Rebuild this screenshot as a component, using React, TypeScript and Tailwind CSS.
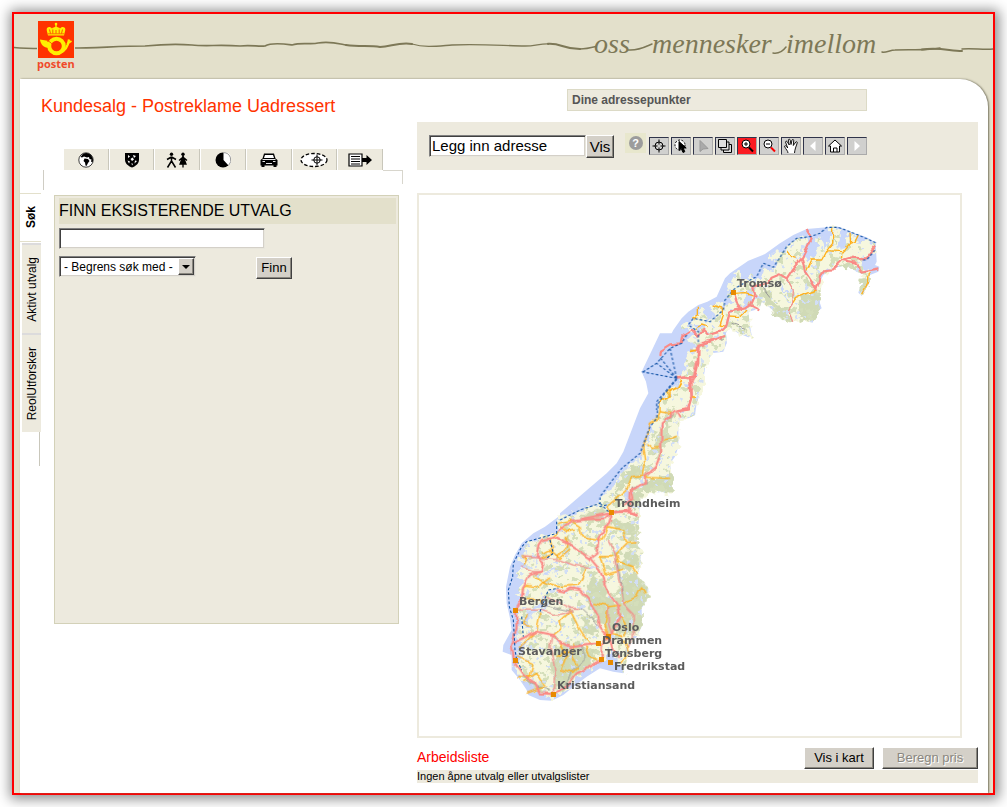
import type { ReactNode } from "react";

const raised =
  "border border-t-white border-l-white border-r-[#404040] border-b-[#404040] bg-[#d4d0c8] shadow-[inset_-1px_-1px_#8a877f]";
const sunken =
  "border border-t-[#808080] border-l-[#808080] border-r-[#e8e6dc] border-b-[#e8e6dc] bg-white shadow-[inset_1px_1px_#404040,inset_-1px_-1px_#d4d0c8]";

function Wave() {
  return (
    <svg
      viewBox="14 14 979 65"
      preserveAspectRatio="xMaxYMid slice"
      className="h-full w-full"
      role="img"
      aria-label="oss mennesker imellom"
    >
      <g fill="none" stroke="#7d7857" strokeLinecap="round">
        <path strokeWidth="1.5" d="M14 47.5C24 48.500 32 48.500 42 48.500" />
        <path strokeWidth="1.700" d="M72 48C95 48 120 46 145 46C160 44.500 180 44 192 45C205 46.500 220 44.500 240 46C252 44.500 258 47 265 46C272 42 285 44 292 45C302 42 312 45 318 43C330 41 338 43.500 346 45" />
        <path strokeWidth="2.100" d="M346 45C360 47 370 45 380 47C392 46 400 42 412 44" />
        <path strokeWidth="1.300" d="M412 44C425 48 438 46 452 45C480 44 500 45.500 525 46C535 46 540 43.500 548 43.800" />
        <path strokeWidth="2.200" d="M548 43.800C562 43 562 49 580 49" />
        <path strokeWidth="1.500" d="M580 49C585 49 590 48 596 46.500M628 50C638 51 645 47 652 44M773 53C779 54 783 51 786 47M882 52C886 53 890 50 895 50C912 49 925 51 940 48" />
        <path strokeWidth="2" d="M922 49.500C940 47 950 51 962 51" />
        <path strokeWidth="1.500" d="M962 49C972 48 984 50 993 49" />
      </g>
      <g className="fill-[#7d7857] font-['Liberation_Serif',serif] italic" fontSize="28">
        <text x="594" y="53">oss</text>
        <text x="652" y="53">mennesker</text>
        <text x="786" y="53">imellom</text>
      </g>
    </svg>
  );
}

function Horn() {
  return (
    <svg viewBox="0 0 36 37" className="h-[37px] w-9" aria-hidden="true">
      <rect width="36" height="37" fill="#ff3300" />
      <g fill="#ffef00">
        <circle cx="18" cy="3" r="1.300" />
        <path d="M17.300 3h1.400v5h-1.400zM9 7c2-1.800 4-.8 5 .5 1.500-2 6.500-2 8 0 1-1.300 3-2.300 5-.5 1 2-.5 4-1 7.500h-16c-.5-3.500-2-5.500-1-7.500z" />
      </g>
      <g stroke="#ff3300" fill="none">
        <path strokeWidth=".8" d="M11.500 8.500l1 4M14.800 8.500v4M18 9v3.500M21.200 8.500v4M24.500 8.500l-1 4" />
        <path strokeWidth=".7" d="M10 12.800h16" />
      </g>
      <path d="M11 20L2 18.500C2.500 23 5.500 27 11 27z" fill="#ffef00" />
      <circle cx="18.500" cy="25" r="7.300" fill="none" stroke="#ffef00" strokeWidth="4" />
      <path d="M9 20c4 .5 6 4 8 8.500 2 1 4-.5 5.500-3" fill="none" stroke="#ff3300" strokeWidth=".9" />
      <path d="M22.500 31.500C28 29.500 30 25 31 18.500" fill="none" stroke="#ffef00" strokeWidth="2.200" />
      <path d="M29 23l4.500-3" stroke="#ffef00" strokeWidth="1.800" />
    </svg>
  );
}

const tabIcons: { label: string; icon: ReactNode }[] = [
  {
    label: "Geografi",
    icon: (
      <svg viewBox="0 0 16 16" className="size-4">
        <circle cx="8" cy="8" r="7.200" fill="#fff" stroke="#111" strokeWidth=".8" />
        <path d="M5 1.800c3-1.300 6-.8 8 1.400 2 2 2.500 5 1.500 7.300L13 9.500l.5-2-2-.5-.5-2-2 .5L6 4.500l-2 1-1.500-.5z" />
        <path d="M6.500 6.500l3.500.5 1.500 2-1.500 2-1.500 3-1-.5-.5-3-1.500-1.500z" />
      </svg>
    ),
  },
  {
    label: "Kommune",
    icon: (
      <svg viewBox="0 0 16 16" className="size-4">
        <path d="M1 1h14v6.500c0 4-3 6.500-7 8-4-1.500-7-4-7-8z" />
        <path d="M4 3l2 1.500L4 6zM9 3l3 1-2 2zM6.500 7l2-1.500 1.500 2-2 1.500zM3.500 8.500l2.500 1-1 2zM11 8.500l2 .5-2.500 2.500zM7.500 11l1.500 1-1 1.500z" fill="#fff" />
      </svg>
    ),
  },
  {
    label: "Personer",
    icon: (
      <svg viewBox="0 0 24 16" className="h-4 w-6">
        <circle cx="6.500" cy="2.300" r="1.700" />
        <path d="M6.500 4.500v5M6.500 5L2 7.500M6.500 5L11 7.500M6.500 9L2.500 15.500M6.500 9L10.500 15.500" stroke="#000" strokeWidth="1.500" fill="none" />
        <circle cx="18" cy="2.300" r="1.700" />
        <path d="M18 4l3 8h-6zM18 5l-4 3.500M18 5l4 3.500M18 11.500v4" stroke="#000" strokeWidth="1.300" />
      </svg>
    ),
  },
  {
    label: "Segmenter",
    icon: (
      <svg viewBox="0 0 16 16" className="size-4">
        <circle cx="8" cy="8" r="7.500" />
        <path d="M8.500 0v8l5 5.500A7.500 7.500 0 0 0 8.500 0z" fill="#fff" />
        <path d="M8.500 .6a7.400 7.400 0 0 1 5 12.800" fill="none" stroke="#555" strokeWidth=".6" />
      </svg>
    ),
  },
  {
    label: "Bil",
    icon: (
      <svg viewBox="0 0 18 16" className="h-4 w-[18px]">
        <path d="M4 1.500h10l1.500 5L17.500 8v5.500h-1V15h-3v-1.500h-9V15h-3v-1.500h-1V8l2-1.500z" />
        <path d="M5 3h8l1 3H4z" fill="#fff" />
        <path d="M2.500 9.500h2.500M13 9.500h2.500M6 11.500h6M2.500 7.500h13" stroke="#fff" strokeWidth=".9" />
      </svg>
    ),
  },
  {
    label: "Område",
    icon: (
      <svg viewBox="0 0 28 16" className="h-4 w-7" fill="none" stroke="#000">
        <ellipse cx="14" cy="8" rx="13" ry="6.500" fill="#fff" strokeWidth="1.300" strokeDasharray="3.500 2" />
        <circle cx="17" cy="8" r="3.200" strokeWidth="1" />
        <path d="M17 2.500v11M11.500 8h11" strokeWidth="1" />
      </svg>
    ),
  },
  {
    label: "Liste",
    icon: (
      <svg viewBox="0 0 24 16" className="h-4 w-6">
        <path d="M1 2h13v12H1z" fill="#fff" stroke="#000" strokeWidth="1.200" />
        <path d="M3 4.500h9M3 7h9M3 9.500h9M3 12h9" stroke="#000" />
        <path d="M14 6h4.500V3L24 8l-5.500 5v-3H14z" />
      </svg>
    ),
  },
];

const tools: { label: string; active?: boolean; icon: ReactNode }[] = [
  {
    label: "Sentrer",
    icon: (
      <>
        <circle cx="8" cy="8" r="4" />
        <path d="M8 1.500v5M8 9.500v5M1.500 8h5M9.500 8h5" />
      </>
    ),
  },
  {
    label: "Velg i område",
    icon: (
      <>
        <circle cx="7" cy="7" r="5" fill="#fff" strokeDasharray="2 1.500" />
        <path d="M6 3.500v9l2.200-2 1.800 4 1.800-.8L10.200 10h3z" fill="#000" />
      </>
    ),
  },
  { label: "Pek", icon: <path d="M5 2.500v11L8 11l5-.5z" fill="#aaa" stroke="#999" /> },
  {
    label: "Lag",
    icon: (
      <>
        <path d="M6.500 6.500h8v8h-8z" fill="#ddd" />
        <path d="M4 4h8v8H4z" fill="#ddd" />
        <path d="M1.500 1.500h8v8h-8z" fill="#ddd" />
      </>
    ),
  },
  {
    label: "Zoom inn",
    active: true,
    icon: (
      <>
        <circle cx="7" cy="6" r="4" fill="#fff" />
        <path d="M5 6h4M7 4v4" />
        <path d="M10 9.500l4 4" strokeWidth="2" />
      </>
    ),
  },
  {
    label: "Zoom ut",
    icon: (
      <>
        <circle cx="7" cy="6" r="4" fill="#fff" />
        <path d="M5 6h4" />
        <path d="M10 9.500l4 4" stroke="#f00" strokeWidth="2" />
      </>
    ),
  },
  {
    label: "Panorer",
    icon: (
      <path
        d="M5 15c0-2-2-3.500-3.500-6.500.3-1.500 2-.8 3.200 1.500L2.500 4c.3-1.200 1.500-1 1.900 0L6.300 7 5.300 2c.4-1.200 1.700-1 1.900.2L8 6.500l1-4.500c.6-1 1.800-.6 1.700.5L10.300 7.500l2.500-3.500c.8-.7 1.800 0 1.400 1L12.500 10c-.4 2-1 3-1 5"
        fill="#fff"
        strokeWidth=".9"
      />
    ),
  },
  { label: "Forrige", icon: <path d="M10.500 3v10L5 8z" fill="#fff" stroke="none" /> },
  {
    label: "Hjem",
    icon: (
      <>
        <path d="M1.500 8L8 2l6.500 6h-2v6h-9V8z" fill="#fff" />
        <path d="M6.500 14v-4h3.500v4" />
      </>
    ),
  },
  { label: "Neste", icon: <path d="M5.500 3v10L11 8z" fill="#fff" stroke="none" /> },
];

/* Map geometry: three sheets (north, middle, south), each at three units per pixel. */
type Sheet = {
  origin: string;
  area: string;
  land: string;
  green: string;
  fjords: string;
  red: string;
  thin: string;
  orange: string;
  grey: string;
  ferry: string;
};

const sheets: Sheet[] = [
  {
    origin: "translate(620 210) scale(.33333)",
    area:
      "M767 98L740 82 700 68 655 50 620 52 560 57 520 75 480 100 435 132 385 152 330 190 315 205 290 260 262 275 235 285 205 305 185 325 160 360 145 390 118 415 110 445 65 485 78 510 88 545 75 580 58 605 60 615 205 615 215 600 225 570 245 530 255 470 275 430 310 425 320 400 318 370 325 350 355 370 385 382 395 375 390 350 385 305 405 300 420 290 425 275 440 285 470 310 490 330 515 335 535 325 560 332 578 338 585 310 605 295 600 280 600 215 610 195 640 175 680 165 710 185 735 195 735 215 720 230 715 248 725 258 735 240 750 215 750 195 775 185 778 170 765 165 770 155Z",
    land:
      "M765 100L745 92 715 92 705 78 692 70 685 95 668 112 655 118 660 80 655 55 635 55 630 75 628 100 610 122 607 75 595 80 590 110 575 150 558 150 550 130 560 100 565 85 555 75 530 85 510 105 490 125 450 130 450 150 475 160 450 185 430 175 425 195 405 215 395 185 385 215 360 205 355 185 340 200 325 240 322 265 345 275 310 290 290 275 270 290 290 320 265 330 245 300 220 320 215 345 250 345 240 365 200 335 180 350 185 360 210 355 235 370 205 385 235 400 225 425 210 440 195 440 200 480 180 500 165 530 140 545 120 570 110 615 205 615 215 600 225 570 245 530 255 470 275 430 310 425 320 400 318 370 325 350 355 370 385 382 395 375 390 350 385 305 405 300 420 290 425 275 440 285 470 310 490 330 515 335 535 325 560 332 578 338 585 310 595 280 600 215 610 195 640 175 680 165 710 185 735 195 735 215 720 230 715 248 725 258 735 240 750 215 750 195 740 175 725 165 725 150 765 125Z",
    green:
      "M455 300L490 320 515 335 480 325ZM530 290L550 255 595 240 600 300 578 335 560 330 535 320ZM425 235L450 250 475 290 505 300 515 335 480 325 455 290 430 270ZM665 155L710 165 720 185 680 170ZM725 200L750 195 748 220 725 255 717 245ZM330 330L350 345 392 375 360 365ZM560 190L575 225 590 240 560 235ZM640 80L655 95 645 105Z",
    fjords: "M568 85L582 95 570 150 556 140ZM610 60L622 85 615 105 605 95ZM480 205L500 240 520 250 515 255 490 245ZM345 270L360 275 355 282ZM380 240L405 225 395 290 370 295Z",
    red:
      "M560 60L575 85 555 125 545 145 520 175 500 205 480 193 455 203 445 220 400 230 405 250 390 285 375 295 330 305 320 345 300 365 265 375 250 360 235 380 215 358 190 375 185 400 150 403 120 422 118 438M545 145L555 185 590 238 600 200 615 180 640 178 668 150 690 143 740 145 765 110M668 150L710 158 722 185 775 175M340 247L355 290 365 295M390 285L415 298M400 255L412 260M315 378L280 390 235 405 235 460 225 500 170 505M210 505L215 560 205 595 170 600",
    thin: "M500 205L520 240 518 280 505 300 518 335",
    orange:
      "M638 55L638 100 620 122 605 150 575 150 560 182M620 122L665 125 665 145M690 68L692 100 668 130M715 75L705 95 692 100M500 120L515 140 530 145M590 240L530 262 518 280M748 190L745 215 728 250M345 250L375 248 400 255M235 290L235 315 220 325M275 285L310 295 310 315 300 345 320 350M325 318L360 320 378 300M225 355L245 345 260 350M210 425L235 420M185 510L175 530 150 545 150 560 120 575M215 560L228 562",
    grey: "M315 378L305 384 310 390M335 340L375 355M430 235L450 260",
    ferry:
      "M767 98L715 75 655 52 620 52 600 70 570 80 530 85 500 110 475 150 460 172 430 160 410 200 380 215 345 235 315 270 310 300 270 335 220 325 205 345 235 365 235 400M200 375L185 400 150 415 110 460 70 485M170 505L65 485M170 505L118 440M170 505L150 415M170 505L110 460M170 505L140 540 110 575 110 600M765 120L740 150 725 150",
  },
  {
    origin: "translate(560 340) scale(.33333)",
    area:
      "M245 95L258 125 265 160 240 205 215 270 190 335 170 370 140 400 75 455 0 520 0 560 235 560 240 480 260 455 290 450 320 460 335 455 335 410 330 370 345 350 355 320 355 260 360 235 385 235 405 225 410 190 430 130 435 75 455 40 500 10 495 -20 300 -20Z",
    land:
      "M500 -10L495 20 455 40 435 75 430 130 410 190 405 225 385 235 360 235 355 260 355 320 345 350 330 370 335 410 335 455 320 460 290 450 260 455 240 480 235 560 0 560 0 530 60 515 75 500 110 495 125 470 160 440 185 400 210 370 245 360 245 340 265 300 270 265 285 235 300 215 295 190 325 155 355 125 390 110 380 90 390 70 375 50 410 20 390 0Z",
    green: "M310 225L345 220 340 250 315 255ZM300 270L320 265 335 295 310 310 300 340 275 340ZM215 380L245 370 240 405 200 430 160 470 150 480 180 430ZM250 430L335 400 335 455 290 450 250 450 225 510 210 480ZM390 70L410 60 400 100Z",
    fjords: "M300 345L315 330 305 370ZM375 130L390 120 388 150ZM270 330L290 315 280 340ZM190 455L210 450 205 500ZM290 380L300 365 295 395Z",
    red:
      "M460 0L415 15 413 60 400 115 395 125 395 165 380 205 345 215 305 250 303 340 285 385 255 410 255 430 212 450 210 510 150 520 100 530 60 538M400 120L380 112 350 115M350 218L360 235M180 515L215 518 235 530",
    thin: "",
    orange:
      "M365 120L350 145 320 155 330 170 300 185 300 215 335 220M300 215L290 240 268 250 262 295 248 320 255 375 250 405 215 410 200 450 140 500 150 515M262 310L280 325 300 322M310 300L330 295 350 288M255 412L330 415M395 170L405 172M390 30L410 32",
    grey: "M305 250L340 225M212 445L262 430 262 418",
    ferry: "M350 118L310 165 295 190 290 235 270 260 255 300 240 340 185 385 150 430 120 470 120 490 60 510 0 540M120 490L145 515",
  },
  {
    origin: "translate(490 490) scale(.33333)",
    area:
      "M300 0L260 30 205 80 165 110 130 130 95 160 75 195 60 230 48 290 50 340 60 385 65 420 40 465 38 485 65 495 65 540 90 570 110 600 115 615 150 630 185 632 220 615 250 590 290 560 330 535 370 545 400 550 410 510 415 470 440 440 455 410 455 355 475 320 475 295 455 270 440 260 450 230 455 180 440 165 440 90 445 0Z",
    land:
      "M540 0L440 20 445 90 440 165 455 180 450 230 440 260 455 270 475 295 475 320 455 355 455 410 440 440 415 470 410 510 400 550 385 520 365 470 350 500 300 535 260 565 220 605 185 622 150 615 130 590 90 565 75 530 95 500 75 480 100 455 78 440 95 400 80 380 95 340 85 300 100 270 80 250 105 230 85 205 110 190 100 170 155 140 205 125 200 100 240 80 290 60 330 60 350 35 410 0Z",
    green:
      "M440 90L440 165 410 130 370 115 365 95ZM440 180L450 200 445 235 415 240 395 215 400 185ZM300 240L325 260 350 305 380 345 385 290 430 240 455 270 475 300 470 325 455 355 455 410 430 430 385 425 360 430 335 405 310 365 285 330 290 290ZM195 470L235 455 275 460 320 480 300 530 255 560 215 600 190 590 185 530ZM270 380L300 390 325 430 290 440ZM100 565L150 580 175 610 150 612ZM220 130L245 145 240 160ZM345 50L355 65 330 90 260 90 300 65Z",
    fjords:
      "M100 205L160 195 165 205 105 215ZM155 245L225 230 220 238 160 255ZM95 400L115 360 160 340 155 350 125 375 115 420ZM150 370L180 325 185 330 160 365ZM65 480L100 455 140 435 110 465 90 490ZM350 500L362 480 368 510ZM380 385L395 420 388 420ZM205 290L190 310 180 300Z",
    red:
      "M365 65L355 100 325 150 320 190 300 205 240 165 205 140 155 150 145 165 140 200 160 215 155 245 120 255 100 290 95 330 78 360 80 410 70 450 65 470 75 520 100 555 135 580 150 610 190 612 230 590 260 550 300 530 335 510 335 470 355 440M300 205L330 240 350 300 385 350 390 380 365 430 355 440M365 65L415 65 445 80M365 65L345 85 290 88 240 95 205 122M425 0L430 25 400 45M70 460L140 425 190 435 210 455 240 472 330 460M200 300L225 305 240 295 270 300 300 335 325 380 330 410 355 440M355 440L365 480 390 500",
    thin:
      "M355 150L375 190 385 260 400 340 430 370 430 440 410 470M100 200L155 205 210 210 250 225 300 232M185 435L180 470 195 540 190 610M165 320L200 335 240 355 270 355M90 230L130 245 155 245M78 360L150 360 200 375 250 362M355 350L355 400 365 430",
    orange:
      "M205 100L240 90 270 110 275 140 340 150 355 110 400 120 410 160 440 158M410 160L380 190 385 215 430 230 440 255M330 200L345 255 400 240M290 235L265 285 200 290 170 280 130 260M325 200L370 200M205 125L180 150 190 190 150 205M230 140L230 170 200 205M310 340L355 350 390 345M355 350L345 400 355 440M385 370L405 400 405 440M400 340L440 320 455 290 465 310M150 370L140 425 90 470M240 360L265 410 290 450 300 462M210 455L230 500 215 540 245 550 265 530M80 500L130 520 120 560 85 560M100 575L140 550 165 590 110 610M190 435L215 415 210 395 240 365M95 300L110 285 145 292 160 275 180 260M250 460L245 500 260 525M290 470L300 500 325 510M400 450L415 490 395 520M365 430L400 440M115 375L100 400 120 410M155 190L180 180 210 205 240 180M110 325L150 330 160 345M210 110L230 125 255 120M100 225L110 205 95 200M200 500L240 480",
    grey: "M270 352L300 380 325 410M375 190L390 260 400 330M150 340L200 355 240 362M220 600L240 550 290 500 270 460M100 560L140 590 180 600M240 165L300 205",
    ferry:
      "M350 45L325 50M200 95L200 130 110 155 95 170 70 220 68 260 55 300 58 350 70 390 75 480 80 510 95 540M95 380L100 440M150 365L175 300 205 295M180 150L190 190 170 205",
  },
];

const cities: { name: string; dot: [number, number]; at: [number, number] }[] = [
  { name: "Tromsø", dot: [734, 293], at: [737, 287] },
  { name: "Trondheim", dot: [612, 513], at: [615, 507] },
  { name: "Bergen", dot: [516, 611], at: [519, 605] },
  { name: "Stavanger", dot: [516, 661], at: [518, 655] },
  { name: "Oslo", dot: [609, 637], at: [612, 631] },
  { name: "Drammen", dot: [599, 644], at: [602, 644] },
  { name: "Tønsberg", dot: [602, 660], at: [605, 657] },
  { name: "Fredrikstad", dot: [611, 663], at: [614, 670] },
  { name: "Kristiansand", dot: [554, 695], at: [557, 689] },
];

function NorwayMap() {
  return (
    <svg viewBox="419 195 541 541" className="block h-full w-full" role="img" aria-label="Kart over Norge">
      <defs>
        <filter id="coast" x="419" y="195" width="541" height="541" filterUnits="userSpaceOnUse">
          <feTurbulence type="fractalNoise" baseFrequency=".16" numOctaves="2" seed="4" result="n" />
          <feDisplacementMap in="SourceGraphic" in2="n" scale="13" xChannelSelector="R" yChannelSelector="G" />
        </filter>
        <filter id="wiggle" x="419" y="195" width="541" height="541" filterUnits="userSpaceOnUse" colorInterpolationFilters="sRGB">
          <feTurbulence type="fractalNoise" baseFrequency=".12" numOctaves="1" seed="8" result="n" />
          <feDisplacementMap in="SourceGraphic" in2="n" scale="6" xChannelSelector="R" yChannelSelector="G" />
        </filter>
        <filter id="hills" x="419" y="195" width="541" height="541" filterUnits="userSpaceOnUse" colorInterpolationFilters="sRGB">
          <feTurbulence type="fractalNoise" baseFrequency=".14" numOctaves="3" seed="11" />
          <feColorMatrix values="0 0 0 0 .83  0 0 0 0 .87  0 0 0 0 .73  22 0 0 0 -13" />
        </filter>
        <filter id="lakes" x="419" y="195" width="541" height="541" filterUnits="userSpaceOnUse" colorInterpolationFilters="sRGB">
          <feTurbulence type="fractalNoise" baseFrequency=".2" numOctaves="2" seed="21" />
          <feColorMatrix values="0 0 0 0 .82  0 0 0 0 .87  0 0 0 0 .96  0 22 0 0 -14.500" />
        </filter>
        <clipPath id="land">
          {sheets.map((s) => (
            <path key={s.origin} transform={s.origin} d={s.land} />
          ))}
        </clipPath>
      </defs>
      {sheets.map((s) => (
        <path key={s.origin} transform={s.origin} d={s.area} fill="#c8d6fa" />
      ))}
      <g filter="url(#coast)">
        {sheets.map((s) => (
          <path key={s.origin} transform={s.origin} d={s.land} fill="#f6f7de" />
        ))}
        {sheets.map((s) => (
          <g key={s.origin} transform={s.origin}>
            <path d={s.green} fill="#d0dab6" />
            <path d={s.fjords} fill="#c8d6fa" />
          </g>
        ))}
      </g>
      <g clipPath="url(#land)">
        <rect x="419" y="195" width="541" height="541" filter="url(#hills)" />
        <rect x="419" y="195" width="541" height="541" filter="url(#lakes)" />
      </g>
      <g filter="url(#wiggle)">
        {sheets.map((s) => (
          <g key={s.origin} transform={s.origin} fill="none" strokeLinejoin="round">
            <path d={s.grey} stroke="#999" strokeWidth="3" />
            <path d={s.orange} stroke="#ffb01c" strokeWidth="4" />
            <path d={s.thin} stroke="#f0908c" strokeWidth="4" />
            <path d={s.red} stroke="#fa8a86" strokeWidth="6.500" />
          </g>
        ))}
      </g>
      {sheets.map((s) => (
        <path
          key={s.origin}
          transform={s.origin}
          d={s.ferry}
          fill="none"
          stroke="#1455a8"
          strokeWidth="3.300"
          strokeDasharray="8 6"
        />
      ))}
      {cities.map((c) => (
        <g key={c.name}>
          <rect x={c.dot[0] - 3} y={c.dot[1] - 3} width="5" height="5" fill="#e88a00" />
          <text
            x={c.at[0]}
            y={c.at[1]}
            fontSize="11"
            className="fill-[#5c5c5c] font-['DejaVu_Sans',sans-serif] font-bold"
          >
            {c.name}
          </text>
        </g>
      ))}
    </svg>
  );
}

function SideTab({ children }: { children: ReactNode }) {
  return (
    <button
      type="button"
      className="flex w-[19px] items-center justify-center border-t-2 border-[#dcdbdc] bg-[#edeade] text-xs"
    >
      <span className="rotate-180 [writing-mode:vertical-rl]">{children}</span>
    </button>
  );
}

export default function App() {
  return (
    <div className="bg-white p-3 font-['Liberation_Sans',Arial,sans-serif] text-black">
      <div className="border-2 border-[#ff0000] bg-[#e3e0cb] shadow-[1px_1px_12px_3px_rgba(0,0,0,0.45)]">
        <header className="relative h-[65px]">
          <Wave />
          <a href="#" className="absolute top-[7px] left-[23px] flex flex-col items-center bg-[#e3e0cb] no-underline">
            <Horn />
            <span className="font-['Open_Sans',sans-serif] text-[11px] leading-3 font-bold text-[#f04a2a]">posten</span>
          </a>
        </header>

        <main className="mr-[5px] ml-1.5 flex rounded-tr-[28px] bg-white pr-2.5 pb-2.5 shadow-[1px_0_2px_#77745f]">
          <section className="w-[397px] shrink-0">
            <h1 className="pt-[15px] pl-[21px] text-lg leading-6 text-[#ff3300]">Kundesalg - Postreklame Uadressert</h1>

            <nav className="mt-[31px] ml-[43px] flex h-[21px] w-80">
              {tabIcons.map((t) => (
                <button
                  key={t.label}
                  type="button"
                  aria-label={t.label}
                  className="flex flex-1 items-center justify-center border-r border-l border-r-[#c9c7bb] border-l-white bg-[#edeade]"
                >
                  {t.icon}
                </button>
              ))}
            </nav>
            <div className="mr-3.5 ml-[23px] flex h-[23px] justify-between">
              <div className="h-5 border-l border-[#cfcdc4]" />
              <div className="h-3.5 w-5 border-t border-r border-[#d8d6cd]" />
            </div>

            <div className="flex">
              <div className="flex w-[21px] shrink-0 flex-col items-end">
                <button
                  type="button"
                  className="flex h-[49px] w-full items-center justify-center border-y border-[#e3e0cb] bg-white text-xs font-bold"
                >
                  <span className="rotate-180 [writing-mode:vertical-rl]">Søk</span>
                </button>
                <div className="mt-px flex flex-col *:first:h-[90px] *:last:h-[99px]">
                  <SideTab>Aktivt utvalg</SideTab>
                  <SideTab>ReolUtforsker</SideTab>
                </div>
                <div className="mr-px h-[34px] border-r border-[#c9c7bb]" />
              </div>

              <form
                className="mt-0.5 mr-[18px] ml-[13px] h-[429px] flex-1 border border-[#d3d1b8] bg-[#edeade] p-1"
                onSubmit={(e) => e.preventDefault()}
              >
                <h2 className="-mt-0.5 -mr-0.5 bg-[#e3e0cb] text-base leading-[26px]">
                  <label htmlFor="utvalg">FINN EKSISTERENDE UTVALG</label>
                </h2>
                <input id="utvalg" className={`mt-1 block h-[21px] w-[206px] px-1 text-sm outline-none ${sunken}`} />
                <div className="mt-[7px] flex items-end justify-between pr-[102px]">
                  <div className="relative mb-0.5">
                    <select
                      aria-label="Begrens søk med"
                      className={`block h-[21px] w-[137px] appearance-none px-1 text-xs leading-4 outline-none ${sunken}`}
                    >
                      <option>- Begrens søk med -</option>
                    </select>
                    <span
                      className={`pointer-events-none absolute top-0.5 right-0.5 flex h-[17px] w-4 items-center justify-center ${raised}`}
                    >
                      <svg viewBox="0 0 8 4" className="h-1 w-2">
                        <path d="M0 0h8L4 4z" />
                      </svg>
                    </span>
                  </div>
                  <button type="submit" className={`h-[22px] w-9 text-[13px] leading-4 ${raised}`}>
                    Finn
                  </button>
                </div>
              </form>
            </div>
          </section>

          <section className="min-w-0 flex-1">
            <div className="mt-2.5 ml-[150px] h-[22px] w-[300px] border border-[#dcdac6] bg-[#edeade] pl-1 text-xs leading-5 font-bold text-[#555]">
              Dine adressepunkter
            </div>

            <div className="mt-[11px] flex h-12 items-start bg-[#edeade] pt-[13px] pl-3">
              <input
                aria-label="Adresse"
                defaultValue="Legg inn adresse"
                className={`h-[22px] w-[157px] px-0.5 text-[15px] outline-none ${sunken}`}
              />
              <button type="button" className={`h-[23px] w-7 text-[15px] leading-5 ${raised}`}>
                Vis
              </button>
              <button
                type="button"
                aria-label="Hjelp"
                className="mr-[3px] -mt-0.5 ml-[11px] flex h-5 w-[21px] items-center justify-center bg-[#e8e7cd]"
              >
                <span className="flex size-3.5 items-center justify-center rounded-full bg-[#9c9c9c] text-[11px] font-bold text-white">
                  ?
                </span>
              </button>
              <div className="mt-0.5 flex gap-0.5">
                {tools.map((t) => (
                  <button
                    key={t.label}
                    type="button"
                    aria-label={t.label}
                    className={`flex h-[18px] w-5 items-center justify-center border border-t-[#30344a] border-l-[#30344a] border-r-[#aaa] border-b-[#aaa] ${
                      t.active ? "bg-[#fb1c22]" : "bg-[#d0d0ce]"
                    }`}
                  >
                    <svg viewBox="0 0 16 16" className="size-4" fill="none" stroke="#000">
                      {t.icon}
                    </svg>
                  </button>
                ))}
              </div>
            </div>

            <div className="mt-[23px] mr-4 aspect-square border-2 border-[#edeade] bg-white">
              <NorwayMap />
            </div>

            <div className="mt-[9px] flex h-[23px] items-start gap-2">
              <h2 className="flex-1 text-sm leading-5 text-[#ff0000]">Arbeidsliste</h2>
              <button type="button" className={`h-[22px] w-[70px] text-[13px] leading-4 ${raised}`}>
                Vis i kart
              </button>
              <button
                type="button"
                disabled
                className={`h-[22px] w-24 text-[13px] leading-4 text-[#8a8780] [text-shadow:1px_1px_#fff] ${raised}`}
              >
                Beregn pris
              </button>
            </div>
            <p className="h-[13px] bg-[#edeade] text-[11px] leading-[13px]">Ingen åpne utvalg eller utvalgslister</p>
          </section>
        </main>
      </div>
    </div>
  );
}
